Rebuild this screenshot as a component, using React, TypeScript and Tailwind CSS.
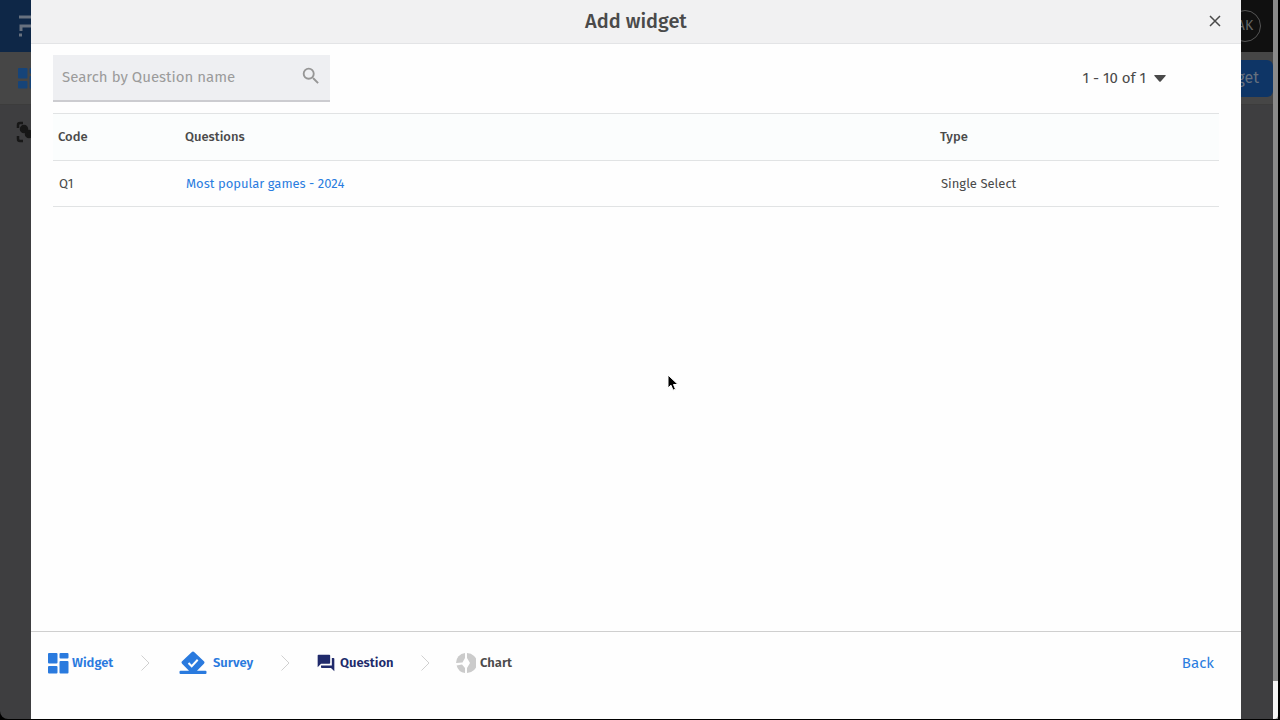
import { useState } from 'react'
import { MdQuestionAnswer, MdSearch } from 'react-icons/md'

const questions = [{ code: 'Q1', name: 'Most popular games - 2024', type: 'Single Select' }]

export default function App() {
  return (
    <div className="relative min-h-screen overflow-hidden bg-black font-['Fira_Sans','Noto_Sans',sans-serif] text-[#4a4a4a]">
      <Backdrop />
      <div className="relative flex min-h-screen pr-[39px] pb-px pl-[31px]">
        <AddWidgetDialog />
      </div>
    </div>
  )
}

// The dashboard under the dialog, already in its dimmed colours.
function Backdrop() {
  return (
    <div className="absolute inset-0 flex pr-0.5 pb-px" aria-hidden="true">
      <div className="flex flex-1 flex-col overflow-hidden rounded-bl-lg bg-[#3e3e40]">
        <div className="flex h-[52px] items-center justify-between bg-[#101010] pr-3">
          <div className="flex h-full w-14 items-center bg-[#0e2747] pl-[18px]">
            <LogoMark />
          </div>
          <span className="flex size-8 items-center justify-center rounded-full border border-[#555] text-sm text-[#666]">
            AK
          </span>
        </div>
        <div className="flex h-[53px] items-center justify-between border-b border-[#3c3c3c] bg-[#464646] pl-[18px] text-[#164479]">
          <WidgetIcon />
          <span className="flex h-[37px] items-center rounded-md bg-[#0e3566] px-3.5 text-base text-[#66717f]">
            Add widget
          </span>
        </div>
        <div className="pt-4 pl-4">
          <FocusIcon />
        </div>
      </div>
      <div className="flex w-[5px] flex-col bg-[#8a8a8a]">
        <div className="mt-auto h-[38px] rounded-br bg-[#f4f4f4]" />
      </div>
    </div>
  )
}

function AddWidgetDialog() {
  const [search, setSearch] = useState('')
  const rows = questions.filter((q) => q.name.toLowerCase().includes(search.toLowerCase()))

  return (
    <section role="dialog" aria-labelledby="dialog-title" className="flex flex-1 flex-col bg-[#fefefe]">
      <header className="relative flex h-11 items-center justify-center border-b border-[#e3e4e6] bg-[#f1f1f2] pb-px">
        <h1 id="dialog-title" className="text-xl font-medium">
          Add widget
        </h1>
        <button type="button" aria-label="Close" className="absolute right-5">
          <svg viewBox="0 0 12 12" className="size-3" stroke="currentColor" strokeWidth="1.5">
            <path d="M1 1l10 10M11 1L1 11" />
          </svg>
        </button>
      </header>

      <main className="flex-1 px-[22px] pt-[11px]">
        <div className="flex items-center justify-between">
          <label className="flex h-[47px] w-[277px] items-center border-b-2 border-[#ccccd0] bg-[#eeeff2] pr-2 pl-[9px]">
            <input
              type="text"
              aria-label="Search by Question name"
              placeholder="Search by Question name"
              value={search}
              onChange={(e) => setSearch(e.target.value)}
              className="min-w-0 flex-1 bg-transparent text-[15px] outline-none placeholder:text-[#9b9b9b]"
            />
            <MdSearch className="mb-1 size-[22px] text-[#969696]" />
          </label>
          <button type="button" className="mr-[53px] flex items-center gap-2 text-[15px]">
            1 - 10 of 1
            <svg viewBox="0 0 12 7" className="h-[7px] w-3" fill="currentColor">
              <path d="M1 0h10q1.400 0 .5 1L6.700 6.500q-.7.700-1.400 0L.5 1Q-.4 0 1 0z" />
            </svg>
          </button>
        </div>

        <table className="mt-[11px] w-full table-fixed text-left text-[13px]">
          <thead>
            <tr className="h-[47px] border-y border-[#e1e3e4] bg-[#fbfdfd]">
              <th className="w-[127px] pl-[5px] font-medium">Code</th>
              <th className="pl-[5px] font-medium">Questions</th>
              <th className="w-[284px] pl-[5px] font-medium">Type</th>
            </tr>
          </thead>
          <tbody>
            {rows.map((q) => (
              <tr key={q.code} className="h-[46px] border-b border-[#e1e3e4]">
                <td className="pl-1.5">{q.code}</td>
                <td className="pl-1.5">
                  <a href="#question" className="text-[#2b7de0]">
                    {q.name}
                  </a>
                </td>
                <td className="pl-1.5">{q.type}</td>
              </tr>
            ))}
          </tbody>
        </table>
      </main>

      <footer className="flex h-[88px] items-start justify-between border-t border-[#cfcfcf] pt-[17px] pr-[27px] pl-[17px]">
        <nav aria-label="Steps" className="flex items-center text-[13px] font-semibold">
          <a href="#widget" className="flex h-7 w-[93px] items-center gap-[3px] text-[#2a7ade]">
            <WidgetIcon />
            Widget
          </a>
          <Chevron />
          <a href="#survey" className="ml-[29px] flex h-7 w-[102px] items-center gap-1.5 text-[#2a7ade]">
            <SurveyIcon />
            Survey
          </a>
          <Chevron />
          <a
            href="#question"
            aria-current="step"
            className="ml-[26px] flex h-7 w-[105px] items-center gap-1 text-[#202a6b]"
          >
            <MdQuestionAnswer className="size-5" />
            Question
          </a>
          <Chevron />
          <a href="#chart" className="ml-[26px] flex h-7 items-center gap-1">
            <ChartIcon />
            Chart
          </a>
        </nav>
        <button type="button" className="h-7 text-[15px] text-[#2b7de0]">
          Back
        </button>
      </footer>

      <Cursor />
    </section>
  )
}

function LogoMark() {
  return (
    <svg viewBox="0 0 22 24" className="h-6 w-[22px]" fill="none" stroke="#67717f" strokeWidth="3">
      <path d="M1 3h14q4 0 4 4.500T15 12H3v5M1 21h3" />
    </svg>
  )
}

function FocusIcon() {
  return (
    <svg viewBox="0 0 22 22" className="size-[22px]" fill="none" stroke="#171717" strokeWidth="2.500">
      <path d="M2 7V4q0-2 2-2h3M15 2h3q2 0 2 2v3M20 15v3q0 2-2 2h-3M7 20H4q-2 0-2-2v-3" />
      <circle cx="8" cy="8" r="3" fill="#171717" />
      <circle cx="13" cy="13" r="3" fill="#171717" />
    </svg>
  )
}

function WidgetIcon() {
  return (
    <svg viewBox="0 0 21 21" className="size-[21px] shrink-0" fill="currentColor">
      <rect x="0" y="0" width="9.500" height="10.500" rx="1" />
      <rect x="0" y="13" width="9.500" height="7.500" rx="1" />
      <rect x="11.500" y="0" width="9" height="5.500" rx="1" />
      <rect x="11.500" y="8" width="9" height="12.500" rx="1" />
    </svg>
  )
}

function SurveyIcon() {
  return (
    <svg viewBox="0 0 28 24" className="h-6 w-7" fill="currentColor">
      <path d="M12.600 1.200q1.400-1.400 2.800 0l9.500 9.100q1.200 1.200 0 2.400L18 19.700h8.500q1 0 1 1v1.300q0 1-1 1h-25q-1 0-1-1v-1.300q0-1 1-1H10l-6.900-7q-1.200-1.200 0-2.400z" />
      <path d="M9.500 12l3.200 3.200 6-6.500" fill="none" stroke="#fefefe" strokeWidth="2" />
    </svg>
  )
}

function ChartIcon() {
  return (
    <svg viewBox="0 0 20 20" className="size-5" fill="#cbcbcb">
      <path d="M11 0a10 10 0 0 1 0 20v-5l3-5-3-5z" />
      <path d="M9 0v5L6.500 9.500 0 10A10 10 0 0 1 9 0z" />
      <path d="M.6 12.500L6 11.500l3 3.500v5a10 10 0 0 1-8.400-7.500z" />
    </svg>
  )
}

function Chevron() {
  return (
    <svg viewBox="0 0 9 16" className="h-4 w-[9px]" fill="none" stroke="#d0d0d0">
      <path d="M.5.5L8 8 .5 15.500" />
    </svg>
  )
}

function Cursor() {
  return (
    <svg viewBox="0 0 12 18" className="pointer-events-none absolute top-[374px] left-[667px] h-[18px] w-3">
      <path d="M1 1v13l3-2.800 2 5 2.500-1-2-4.700H11z" stroke="#fff" />
    </svg>
  )
}
